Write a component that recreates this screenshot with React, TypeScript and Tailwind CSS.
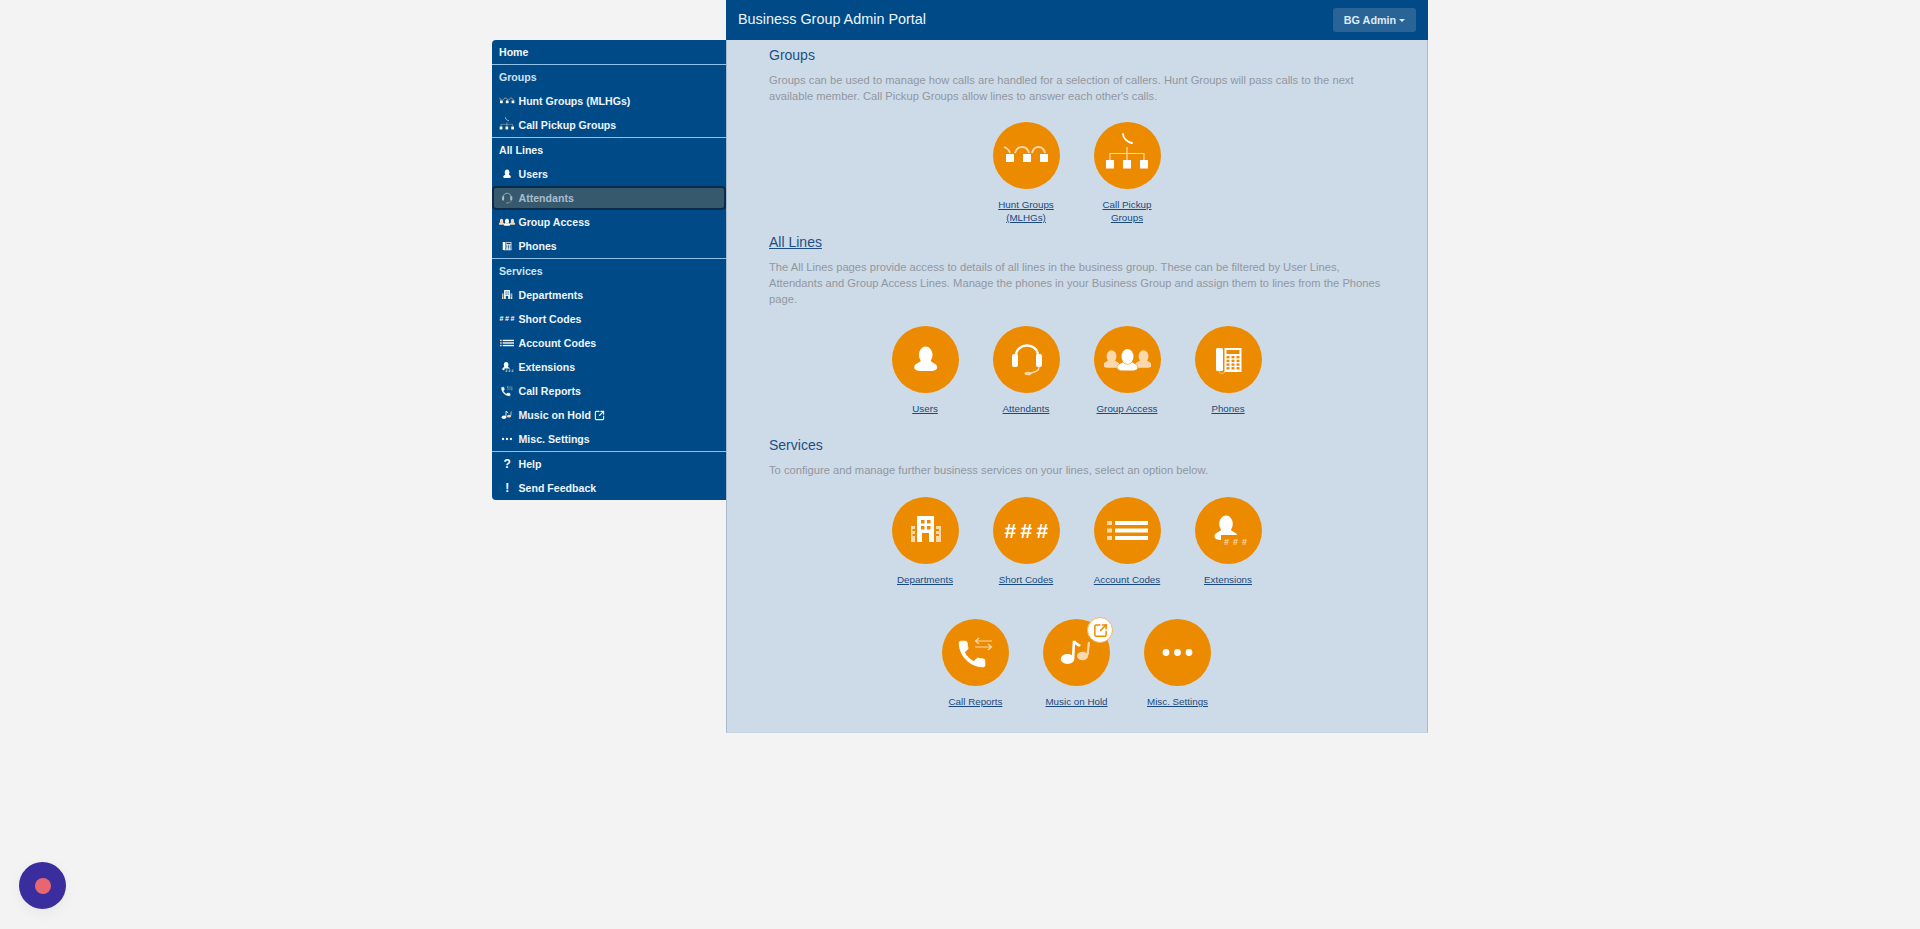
import React from 'react';
import { SquareArrowOutUpRight } from 'lucide-react';

const CREAM = '#fcd9ac';

type Glyph = () => React.ReactElement;

// all glyphs are drawn in the same 47 unit box, see Icon below
const Person = ({ x, y, s = 1, fill = '#fff', outline }: { x: number; y: number; s?: number; fill?: string; outline?: boolean }) => (
    <g transform={`translate(${x} ${y}) scale(${s})`} fill={fill} stroke={outline ? 'currentColor' : 'none'} strokeWidth={outline ? 1.2 : 0} paintOrder="stroke">
        <path d="M-4.5 13 C-5 16 -11.5 16 -11.5 20.5 C-11.5 23 -8 24 -5 24 H5 C8 24 11.5 23 11.5 20.5 C11.5 16 5 16 4.5 13 Z" />
        <ellipse cx="0" cy="8" rx="6.8" ry="8.5" />
    </g>
);

const HuntIcon: Glyph = () => (
    <g>
        <path d="M11 25 C14 26 16 28 17 31 M22 31 C24 23 34 23 36 31 M39 31 C41 23 50 23 52 31" fill="none" stroke={CREAM} strokeWidth="1.8" />
        <rect x="13" y="32" width="8" height="8" fill="#fff" />
        <rect x="30" y="32" width="8" height="8" fill="#fff" />
        <rect x="47" y="32" width="8" height="8" fill="#fff" />
    </g>
);

const PickupIcon: Glyph = () => (
    <g>
        <path d="M29 12 C29 16 33 20 38 21" fill="none" stroke="#fff" strokeWidth="1.8" strokeLinecap="round" />
        <path d="M33 25 V38 M16 38 V31.5 H50 V38" fill="none" stroke={CREAM} strokeWidth="1.2" />
        <rect x="12" y="38" width="8" height="8.5" fill="#fff" />
        <rect x="29" y="38" width="8" height="8.5" fill="#fff" />
        <rect x="46" y="38" width="8" height="8.5" fill="#fff" />
    </g>
);

const UserIcon: Glyph = () => <Person x={33.7} y={21} />;

const HeadsetIcon: Glyph = () => (
    <g>
        <path d="M23 30 C23 16 45 16 45 30" fill="none" stroke="#fff" strokeWidth="2.4" />
        <rect x="19" y="28" width="6" height="13" rx="2" fill="#fff" />
        <rect x="43" y="28" width="6" height="13" rx="2" fill="#fff" />
        <path d="M46 41 C46 45 42 46 38 47" fill="none" stroke={CREAM} strokeWidth="1.4" />
        <ellipse cx="35" cy="47.5" rx="3.5" ry="1.8" fill={CREAM} />
    </g>
);

const GroupIcon: Glyph = () => (
    <g>
        <Person x={17.5} y={24.5} s={0.72} fill={CREAM} />
        <Person x={49.5} y={24.5} s={0.72} fill={CREAM} />
        <Person x={33.5} y={23.5} s={0.88} outline />
    </g>
);

const PhoneKeypadIcon: Glyph = () => (
    <g>
        <rect x="21" y="22" width="7" height="23" rx="1.5" fill="#fff" />
        <rect x="29.5" y="22" width="17" height="24" fill="#fff" />
        <rect x="31.5" y="24" width="13" height="4" fill="currentColor" />
        {[30, 33.7, 37.4, 41.1].map((y) =>
            [31.5, 36.5, 41.5].map((x) => <rect key={`${x}-${y}`} x={x} y={y} width="3" height="2.4" fill="currentColor" />),
        )}
        <path d="M24 45 C24 48 28 48 30 46" fill="none" stroke={CREAM} strokeWidth="0.8" />
    </g>
);

const BuildingIcon: Glyph = () => (
    <g>
        <rect x="25" y="19" width="17" height="26" fill="#fff" />
        {[23, 29].map((y) =>
            [29, 35].map((x) => <rect key={`${x}-${y}`} x={x} y={y} width="3.5" height="3.5" fill="currentColor" />),
        )}
        <rect x="30" y="36" width="7" height="9" fill="currentColor" />
        <path d="M19 29 H23 V45 H19 Z M44 29 H49 V45 H44 Z" fill={CREAM} />
        <path d="M20.5 32 H23 V34 H20.5 Z M20.5 37 H23 V39 H20.5 Z M44 32 H47 V34 H44 Z M44 37 H47 V39 H44 Z" fill="currentColor" />
    </g>
);

const HashIcon: Glyph = () => (
    <g fill="#fff" fontFamily='"Liberation Sans", sans-serif' fontSize="21" fontWeight="700">
        <text x="11.5" y="40.5">#</text>
        <text x="27.5" y="40.5">#</text>
        <text x="43.5" y="40.5">#</text>
    </g>
);

const ListIcon: Glyph = () => (
    <g fill="#fff">
        {[24, 31.5, 39].map((y) => (
            <React.Fragment key={y}>
                <rect x="13" y={y} width="5" height="4" fill={CREAM} />
                <rect x="21" y={y} width="33" height="4" />
            </React.Fragment>
        ))}
    </g>
);

const ExtensionIcon: Glyph = () => (
    <g>
        <Person x={31} y={19} />
        <rect x="26" y="38" width="30" height="12" fill="currentColor" />
        <g fill={CREAM} fontFamily='"Liberation Sans", sans-serif' fontSize="9" fontWeight="700">
            <text x="29" y="48">#</text>
            <text x="38" y="48">#</text>
            <text x="47" y="48">#</text>
        </g>
    </g>
);

const ReportIcon: Glyph = () => (
    <g>
        <path
            transform="translate(13 18) scale(1.42)"
            fill="#fff"
            stroke="#fff"
            strokeWidth="0.7"
            d="M6.62 10.79c1.44 2.83 3.76 5.14 6.59 6.59l2.2-2.2c.27-.27.67-.36 1.02-.24 1.12.37 2.33.57 3.57.57.55 0 1 .45 1 1V20c0 .55-.45 1-1 1-9.39 0-17-7.61-17-17 0-.55.45-1 1-1h3.5c.55 0 1 .45 1 1 0 1.25.2 2.45.57 3.57.11.35.03.74-.25 1.02l-2.2 2.2z"
        />
        <path d="M50 22 H34 M37 19 L33.5 22 L37 25 M33 28 H49 M46 25 L49.5 28 L46 31" fill="none" stroke={CREAM} strokeWidth="1.2" />
    </g>
);

const MusicIcon: Glyph = () => (
    <g>
        <path d="M44.5 36 L46 23" fill="none" stroke={CREAM} strokeWidth="2.2" />
        <ellipse cx="39.5" cy="37" rx="5.5" ry="4.2" fill={CREAM} />
        <path d="M30 40 L31 22 C32 25 35 25 37 27" fill="none" stroke="#fff" strokeWidth="2.6" />
        <ellipse cx="24.5" cy="40" rx="6.8" ry="5" fill="#fff" />
    </g>
);

const DotsIcon: Glyph = () => (
    <g fill="#fff">
        <circle cx="22" cy="33.5" r="3.4" />
        <circle cx="33.5" cy="33.5" r="3.4" />
        <circle cx="45" cy="33.5" r="3.4" />
    </g>
);

// crops the 67 unit circle to the glyph area, scale is set by the caller
function Icon({ glyph: G, className }: { glyph: Glyph; className: string }) {
    return (
        <svg viewBox="10 10 47 47" className={className}>
            <G />
        </svg>
    );
}

type MenuItem = { name: string; icon?: Glyph; char?: string; external?: boolean; active?: boolean };
type MenuSection = { title: string; bright?: boolean; items: MenuItem[] };

const topSections: MenuSection[] = [
    {
        title: 'Groups',
        items: [
            { name: 'Hunt Groups (MLHGs)', icon: HuntIcon },
            { name: 'Call Pickup Groups', icon: PickupIcon },
        ],
    },
    {
        title: 'All Lines',
        bright: true,
        items: [
            { name: 'Users', icon: UserIcon },
            { name: 'Attendants', icon: HeadsetIcon, active: true },
            { name: 'Group Access', icon: GroupIcon },
            { name: 'Phones', icon: PhoneKeypadIcon },
        ],
    },
    {
        title: 'Services',
        items: [
            { name: 'Departments', icon: BuildingIcon },
            { name: 'Short Codes', icon: HashIcon },
            { name: 'Account Codes', icon: ListIcon },
            { name: 'Extensions', icon: ExtensionIcon },
            { name: 'Call Reports', icon: ReportIcon },
            { name: 'Music on Hold', icon: MusicIcon, external: true },
            { name: 'Misc. Settings', icon: DotsIcon },
        ],
    },
];

const helpItems: MenuItem[] = [
    { name: 'Help', char: '?' },
    { name: 'Send Feedback', char: '!' },
];

function SideRow({ item }: { item: MenuItem }) {
    return (
        <a
            href="#"
            className={`flex h-6 items-center pl-[4px] text-[10.6px] font-bold ${
                item.active
                    ? 'rounded-[4px] border-2 border-[#0b2b4a] bg-[#37596e] text-[#a9bccb]'
                    : 'text-[#eef5fb]'
            }`}
        >
            <span className={`flex w-[22.5px] shrink-0 justify-center ${item.active ? '-ml-[2px] text-[#37596e] opacity-60' : 'text-[#004a88]'}`}>
                {item.icon ? (
                    <Icon glyph={item.icon} className="h-4 w-4" />
                ) : (
                    <span className="text-[12px] font-bold text-white">{item.char}</span>
                )}
            </span>
            <span className="pt-px">{item.name}</span>
            {item.external && <SquareArrowOutUpRight size={11} strokeWidth={2.4} className="ml-[3px]" />}
        </a>
    );
}

function Sidebar() {
    return (
        <nav className="mt-10 h-[460px] w-[234px] shrink-0 overflow-hidden rounded-l-[4px] bg-[#004a88]">
            <a href="#" className="flex h-6 items-center pl-[7px] pt-px text-[10.6px] font-bold text-[#f2f7fb]">
                Home
            </a>
            {topSections.map((section) => (
                <div key={section.title} className="border-t border-[#8fc1ea]">
                    <div className={`flex h-6 items-center pl-[7px] pt-px text-[10.6px] font-bold ${section.bright ? 'text-[#f2f7fb]' : 'text-[#cfe2f3]'}`}>
                        {section.title}
                    </div>
                    {section.items.map((item) => (
                        <SideRow key={item.name} item={item} />
                    ))}
                </div>
            ))}
            <div className="border-t border-[#8fc1ea]">
                {helpItems.map((item) => (
                    <SideRow key={item.name} item={item} />
                ))}
            </div>
        </nav>
    );
}

function Tile({ label, glyph, badge, lines }: { label: string; glyph: Glyph; badge?: boolean; lines?: string[] }) {
    return (
        <a href="#" className="flex w-[101px] flex-col items-center">
            <span className="relative flex h-[67px] w-[67px] items-center justify-center rounded-full bg-[#ed8b00] text-[#ed8b00]">
                <Icon glyph={glyph} className="h-[47px] w-[47px]" />
                {badge && (
                    <span className="absolute -right-[3px] -top-[2px] flex h-[26px] w-[26px] items-center justify-center rounded-full border border-[#f5b45c] bg-white">
                        <SquareArrowOutUpRight size={15} strokeWidth={2.4} className="text-[#ed8b00]" />
                    </span>
                )}
            </span>
            <span className="mt-[9px] text-center text-[9.8px] leading-[13px] text-[#1a4a7c] underline">
                {lines ? lines.map((l) => <span key={l} className="block">{l}</span>) : label}
            </span>
        </a>
    );
}

function Heading({ children, link }: { children: string; link?: boolean }) {
    return <h2 className={`text-[14px] leading-4 text-[#1d4f84] ${link ? 'underline' : ''}`}>{children}</h2>;
}

function Body({ children }: { children: string }) {
    return <p className="mt-[9px] text-[11.2px] leading-4 text-[#92979e]">{children}</p>;
}

export default function App() {
    return (
        <div className="h-[929px] overflow-hidden bg-[#f3f3f3] font-['Liberation_Sans',Arial,sans-serif]">
            <div className="mx-auto flex w-[936px]">
                <Sidebar />
                <div className="w-[702px]">
                    <header className="flex h-10 items-center justify-between bg-[#004a88] pl-3 pr-3">
                        <span className="text-[14.4px] text-[#eef6fc]">Business Group Admin Portal</span>
                        <button className="flex h-6 w-[83px] items-center justify-center gap-[3px] rounded-[3px] bg-[#2a6496] text-[10.8px] font-bold text-[#dcebf7]">
                            BG Admin
                            <span className="mt-[1px] h-0 w-0 border-x-[3px] border-t-[3px] border-x-transparent border-t-[#dcebf7]" />
                        </button>
                    </header>
                    <main className="h-[693px] border-x border-b border-[#a9bbcd] border-b-[#c5d3e0] bg-[#cddbe9] pl-[42px] pr-[43px] pt-[7px]">
                        <Heading>Groups</Heading>
                        <Body>Groups can be used to manage how calls are handled for a selection of callers. Hunt Groups will pass calls to the next available member. Call Pickup Groups allow lines to answer each other's calls.</Body>
                        <div className="mt-[18px] flex justify-center">
                            <Tile label="Hunt Groups (MLHGs)" lines={['Hunt Groups', '(MLHGs)']} glyph={HuntIcon} />
                            <Tile label="Call Pickup Groups" lines={['Call Pickup', 'Groups']} glyph={PickupIcon} />
                        </div>
                        <div className="mt-[10px]">
                            <Heading link>All Lines</Heading>
                        </div>
                        <Body>The All Lines pages provide access to details of all lines in the business group. These can be filtered by User Lines, Attendants and Group Access Lines. Manage the phones in your Business Group and assign them to lines from the Phones page.</Body>
                        <div className="mt-[19px] flex justify-center">
                            <Tile label="Users" glyph={UserIcon} />
                            <Tile label="Attendants" glyph={HeadsetIcon} />
                            <Tile label="Group Access" glyph={GroupIcon} />
                            <Tile label="Phones" glyph={PhoneKeypadIcon} />
                        </div>
                        <div className="mt-[22px]">
                            <Heading>Services</Heading>
                        </div>
                        <Body>To configure and manage further business services on your lines, select an option below.</Body>
                        <div className="mt-[19px] flex justify-center">
                            <Tile label="Departments" glyph={BuildingIcon} />
                            <Tile label="Short Codes" glyph={HashIcon} />
                            <Tile label="Account Codes" glyph={ListIcon} />
                            <Tile label="Extensions" glyph={ExtensionIcon} />
                        </div>
                        <div className="mt-[33px] flex justify-center">
                            <Tile label="Call Reports" glyph={ReportIcon} />
                            <Tile label="Music on Hold" glyph={MusicIcon} badge />
                            <Tile label="Misc. Settings" glyph={DotsIcon} />
                        </div>
                    </main>
                </div>
            </div>
            <div className="fixed bottom-[20px] left-[19px] flex h-[47px] w-[47px] items-center justify-center rounded-full bg-[#3a2d9e] shadow-[0_4px_14px_rgba(0,0,0,0.05)]">
                <span className="h-4 w-4 rounded-full bg-[#e8666f]" />
            </div>
        </div>
    );
}
